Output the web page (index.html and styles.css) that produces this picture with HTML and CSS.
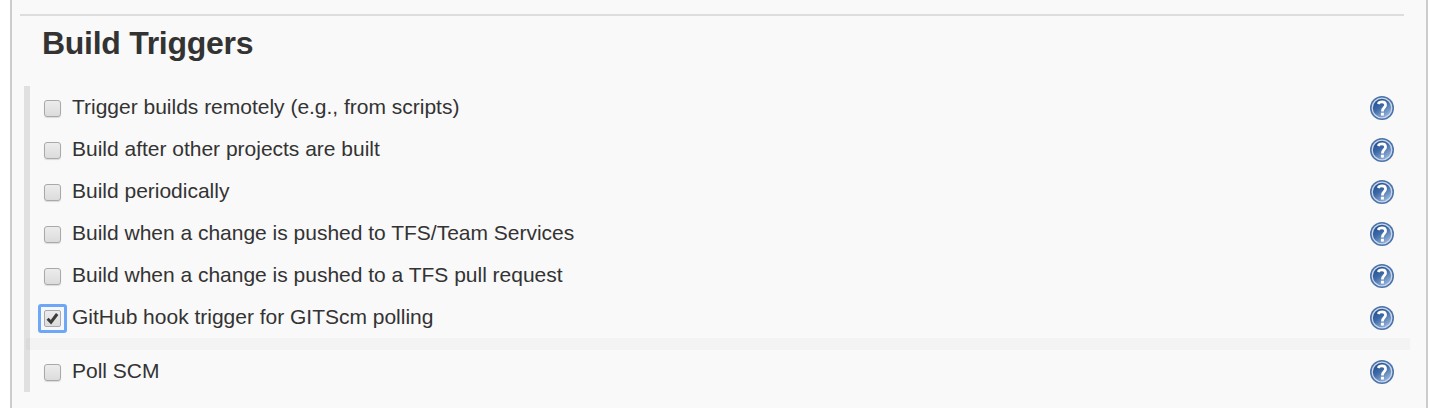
FILE: index.html
```html
<!DOCTYPE html>
<html lang="en">
<head>
<meta charset="utf-8">
<title>Build Triggers</title>
<link rel="stylesheet" href="styles.css">
</head>
<body>
<svg class="defs" aria-hidden="true">
  <defs>
    <linearGradient id="ball" x1="0.1" y1="0" x2="0.8" y2="1">
      <stop offset="0" stop-color="#1f4a8a"/>
      <stop offset="0.45" stop-color="#3e69a6"/>
      <stop offset="1" stop-color="#a3c0e4"/>
    </linearGradient>
    <symbol id="help" viewBox="0 0 24 24">
      <circle cx="12" cy="12" r="12" fill="#4c73aa"/>
      <circle cx="12" cy="12" r="9.8" fill="url(#ball)" stroke="#cbd8ea" stroke-width="1.3"/>
      <path d="M8.2 7.9C8.8 6.4 10.2 5.9 12 5.9C14.3 5.9 15.6 7 15.6 8.9C15.6 11.6 12.4 11.6 12.4 15.4" fill="none" stroke="#fff" stroke-width="2.7"/>
      <rect x="10.9" y="16.7" width="3" height="2.9" fill="#fff"/>
    </symbol>
  </defs>
</svg>
<main class="panel">
  <hr class="rule">
  <h1 class="title">Build Triggers</h1>
  <section class="triggers">
    <div class="row"><span class="box"></span><span class="label">Trigger builds remotely (e.g., from scripts)</span><svg class="help"><use href="#help"/></svg></div>
    <div class="row"><span class="box"></span><span class="label">Build after other projects are built</span><svg class="help"><use href="#help"/></svg></div>
    <div class="row"><span class="box"></span><span class="label">Build periodically</span><svg class="help"><use href="#help"/></svg></div>
    <div class="row"><span class="box"></span><span class="label">Build when a change is pushed to TFS/Team Services</span><svg class="help"><use href="#help"/></svg></div>
    <div class="row"><span class="box"></span><span class="label">Build when a change is pushed to a TFS pull request</span><svg class="help"><use href="#help"/></svg></div>
    <div class="row"><span class="box focused"><svg class="check" viewBox="0 0 15 15"><path d="M2.6 7.8L6 11.2L12.2 3" fill="none" stroke="#3c3c3c" stroke-width="3"/></svg></span><span class="label">GitHub hook trigger for GITScm polling</span><svg class="help"><use href="#help"/></svg></div>
    <div class="divider"></div>
    <div class="row"><span class="box"></span><span class="label">Poll SCM</span><svg class="help"><use href="#help"/></svg></div>
  </section>
</main>
</body>
</html>
```
FILE: styles.css
```css
* { box-sizing: border-box; }
body {
  margin: 0;
  background: #fff;
  color: #333;
  font-family: "Liberation Sans", Arial, sans-serif;
}
.defs { position: absolute; width: 0; height: 0; }
.panel {
  height: 408px;
  margin: 0 14px 0 10px;
  padding: 14px 16px 0 8px;
  background: #f9f9f9;
  border: solid #ccc;
  border-width: 0 2px;
  overflow: hidden;
}
.rule {
  height: 2px;
  margin: 0 6px 0 0;
  border: 0;
  background: #ddd;
}
.title {
  height: 70px;
  margin: 0;
  padding: 7px 0 0 22px;
  font-size: 32px;
  line-height: 40px;
  font-weight: bold;
  letter-spacing: -0.28px;
  white-space: nowrap;
}
.triggers {
  height: 306px;
  margin-left: 4px;
  border-left: 6px solid #e0e0e0;
}
.row {
  display: flex;
  align-items: center;
  height: 42px;
  padding: 2px 16px 0 14px;
}
.box {
  flex: none;
  width: 17px;
  height: 17px;
  margin-top: 1px;
  border: 1px solid #a9a9a9;
  border-radius: 3px;
  background: linear-gradient(#ececec, #dcdcdc);
  box-shadow: 0 1px 1px rgba(0, 0, 0, .12);
}
.focused {
  border-radius: 2px;
  box-shadow: 0 0 0 3px #f5f9ff;
  position: relative;
}
.focused::after {
  content: "";
  position: absolute;
  inset: -7px;
  border: 3px solid #6ea7f5;
  border-radius: 3px;
}
.check { display: block; width: 15px; height: 15px; }
.label {
  flex: 1;
  padding: 0 0 2px 11px;
  font-size: 21px;
  line-height: 24px;
  letter-spacing: -0.01px;
  white-space: nowrap;
}
.help { flex: none; width: 24px; height: 24px; }
.divider { height: 12px; margin-left: -4px; background: rgba(0, 0, 0, .025); }
```
